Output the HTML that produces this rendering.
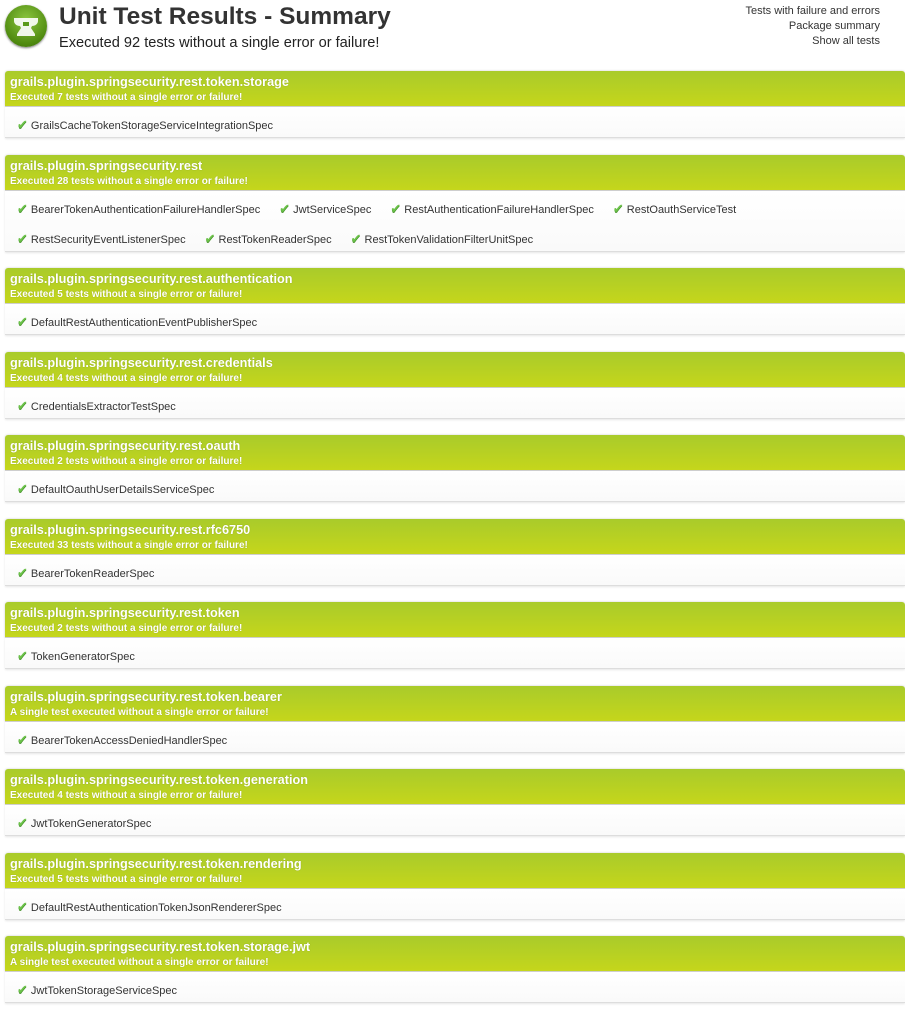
<!DOCTYPE html>
<html><head><meta charset="utf-8"><style>
body{margin:0;background:#fff;font-family:"Liberation Sans",Arial,sans-serif;color:#333;width:905px;height:1008px;overflow:hidden;position:relative}
.logo{position:absolute;left:5px;top:5px;width:42px;height:42px;border-radius:50%;background:radial-gradient(circle at 50% 35%,#8cc63f,#4f8a10 70%,#3a6b08);box-shadow:0 1px 2px #777}
h1{position:absolute;left:59px;top:3px;margin:0;font-size:24.5px;font-weight:bold;color:#333}
.sub{position:absolute;left:59px;top:35px;font-size:14.6px;color:#222}
.links{position:absolute;right:25px;top:4px;text-align:right;font-size:11px;line-height:15px;color:#333}
.p{position:absolute;left:5px;width:900px}
.h{height:36px;background:linear-gradient(#a9cb2b,#c5d61b);border-radius:3px 3px 0 0;color:#fff;text-shadow:0 0 1px rgba(0,0,0,.25);box-shadow:0 0 2px #ccc;border-bottom:1px solid #ccc;box-sizing:border-box}
.h b{display:block;padding:4px 0 0 5px;font-size:12.7px;line-height:15px}
.h i{display:block;font-style:normal;font-weight:bold;padding-left:5px;font-size:10px;line-height:15px}
.b{background:linear-gradient(#fff,#fafafa);border-bottom:1px solid #ddd;box-shadow:0 1px 2px #e6e6e6;padding:0 12px;font-size:11px}
.r{height:30px;line-height:35px;white-space:nowrap}
.r span{margin-right:19px}
.r span:before{content:"\2714";color:#6cc24a;font-size:13px;margin-right:3px;text-shadow:0 1px 0 #3c8c20}
</style></head><body>
<div class="logo"><svg width="42" height="42" viewBox="0 0 42 42"><path d="M9 13h24v3c0 3-3 5-6 5l-1 2 4 6v2H12v-2l4-6-1-2c-3 0-6-2-6-5z" fill="#fff" opacity=".9"/><path d="M18 17h6v4h-6z" fill="#5a9a18"/></svg></div>
<h1>Unit Test Results - Summary</h1>
<div class="sub">Executed 92 tests without a single error or failure!</div>
<div class="links">Tests with failure and errors<br>Package summary<br>Show all tests</div>

<div class="p" style="top:71px"><div class="h"><b>grails.plugin.springsecurity.rest.token.storage</b><i>Executed 7 tests without a single error or failure!</i></div><div class="b"><div class="r"><span>GrailsCacheTokenStorageServiceIntegrationSpec</span></div></div></div>

<div class="p" style="top:155px"><div class="h"><b>grails.plugin.springsecurity.rest</b><i>Executed 28 tests without a single error or failure!</i></div><div class="b"><div class="r"><span>BearerTokenAuthenticationFailureHandlerSpec</span><span>JwtServiceSpec</span><span>RestAuthenticationFailureHandlerSpec</span><span>RestOauthServiceTest</span></div><div class="r"><span>RestSecurityEventListenerSpec</span><span>RestTokenReaderSpec</span><span>RestTokenValidationFilterUnitSpec</span></div></div></div>

<div class="p" style="top:268px"><div class="h"><b>grails.plugin.springsecurity.rest.authentication</b><i>Executed 5 tests without a single error or failure!</i></div><div class="b"><div class="r"><span>DefaultRestAuthenticationEventPublisherSpec</span></div></div></div>

<div class="p" style="top:352px"><div class="h"><b>grails.plugin.springsecurity.rest.credentials</b><i>Executed 4 tests without a single error or failure!</i></div><div class="b"><div class="r"><span>CredentialsExtractorTestSpec</span></div></div></div>

<div class="p" style="top:435px"><div class="h"><b>grails.plugin.springsecurity.rest.oauth</b><i>Executed 2 tests without a single error or failure!</i></div><div class="b"><div class="r"><span>DefaultOauthUserDetailsServiceSpec</span></div></div></div>

<div class="p" style="top:519px"><div class="h"><b>grails.plugin.springsecurity.rest.rfc6750</b><i>Executed 33 tests without a single error or failure!</i></div><div class="b"><div class="r"><span>BearerTokenReaderSpec</span></div></div></div>

<div class="p" style="top:602px"><div class="h"><b>grails.plugin.springsecurity.rest.token</b><i>Executed 2 tests without a single error or failure!</i></div><div class="b"><div class="r"><span>TokenGeneratorSpec</span></div></div></div>

<div class="p" style="top:686px"><div class="h"><b>grails.plugin.springsecurity.rest.token.bearer</b><i>A single test executed without a single error or failure!</i></div><div class="b"><div class="r"><span>BearerTokenAccessDeniedHandlerSpec</span></div></div></div>

<div class="p" style="top:769px"><div class="h"><b>grails.plugin.springsecurity.rest.token.generation</b><i>Executed 4 tests without a single error or failure!</i></div><div class="b"><div class="r"><span>JwtTokenGeneratorSpec</span></div></div></div>

<div class="p" style="top:853px"><div class="h"><b>grails.plugin.springsecurity.rest.token.rendering</b><i>Executed 5 tests without a single error or failure!</i></div><div class="b"><div class="r"><span>DefaultRestAuthenticationTokenJsonRendererSpec</span></div></div></div>

<div class="p" style="top:936px"><div class="h"><b>grails.plugin.springsecurity.rest.token.storage.jwt</b><i>A single test executed without a single error or failure!</i></div><div class="b"><div class="r"><span>JwtTokenStorageServiceSpec</span></div></div></div>
</body></html>
